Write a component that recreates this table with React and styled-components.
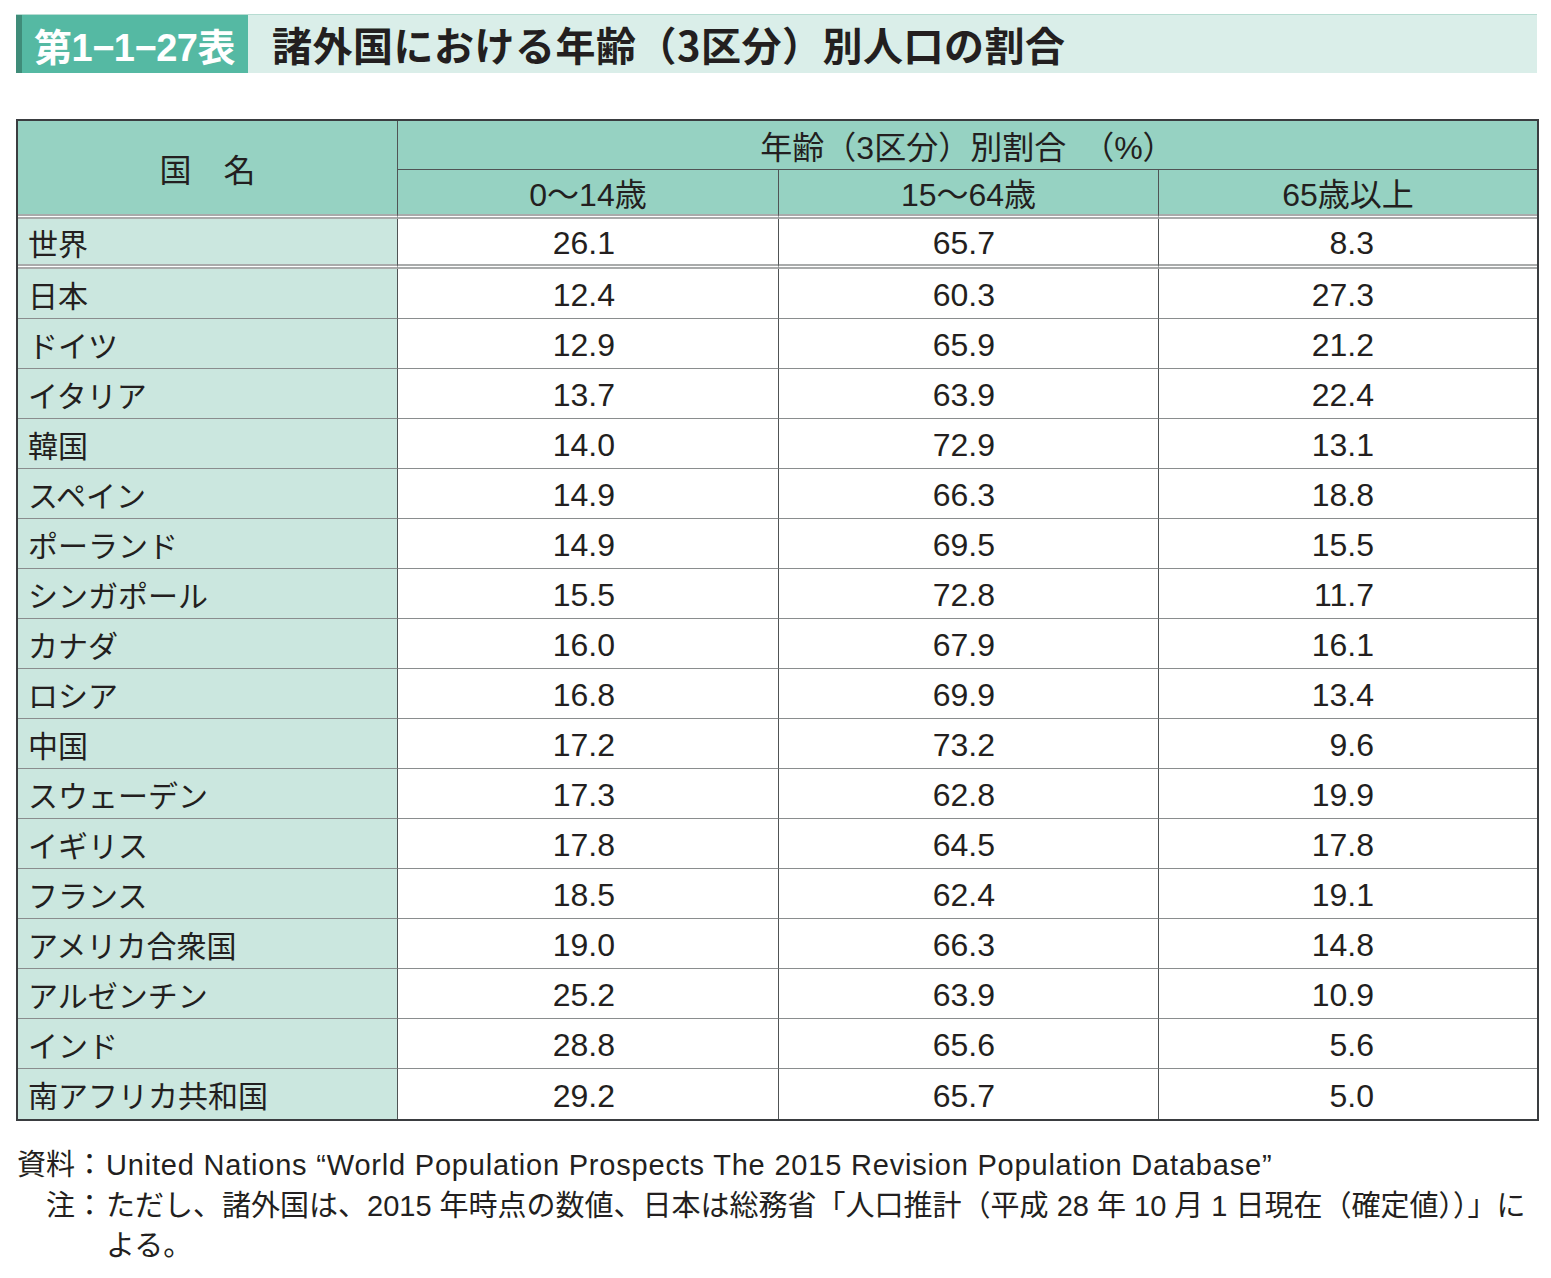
import React from "react";
import styled, { createGlobalStyle } from "styled-components";

const colors = {
  ink: "#231f20",
  label: "#55b9a3",
  stripe: "#3f8c79",
  titleBg: "#daeee9",
  head: "#96d2c2",
  name: "#cbe7df",
  frame: "#3a3d40",
  rule: "#8a8d8e",
  double: "#a9abab",
  vline: "#505455"
};

const jp = `"Noto Sans CJK JP", "Noto Sans", sans-serif`;
const latin = `"Liberation Sans", "Noto Sans CJK JP", sans-serif`;

const GlobalStyle = createGlobalStyle`
  body {
    margin: 0;
    background: #fff;
    color: ${colors.ink};
    font-family: ${jp};
  }
  * { box-sizing: border-box; }
`;

const Page = styled.div`
  width: 1551px;
  padding: 14px 12px 0 16px;
`;

const TitleBar = styled.div`
  display: flex;
  align-items: center;
  height: 59px;
  width: 1521px;
  background: ${colors.titleBg};
  border-top: 1px solid #b7dcd2;
`;

const TitleLabel = styled.div`
  display: flex;
  align-items: center;
  width: 232px;
  height: 100%;
  padding-left: 12px;
  background: ${colors.label};
  border-left: 6px solid ${colors.stripe};
  color: #fff;
  font-family: ${latin};
  font-weight: 700;
  font-size: 38px;
  letter-spacing: -0.5px;
`;

const TitleText = styled.h1`
  margin: 0 0 0 24px;
  font-family: ${jp};
  font-weight: 700;
  font-size: 40px;
  letter-spacing: 0.5px;
`;

const Table = styled.div`
  margin-top: 46px;
  width: 1523px;
  display: grid;
  grid-template-columns: 380px 381px 380px 1fr;
  border: 2px solid ${colors.frame};
  background: #fff;
`;

const Cell = styled.div`
  display: flex;
  align-items: center;
  height: ${({ $h }) => $h || 50}px;
  background: ${({ $kind }) =>
    $kind === "head" ? colors.head : $kind === "name" ? colors.name : "#fff"};
  background-clip: padding-box;
  border-right: ${({ $last }) => ($last ? "none" : `1px solid ${colors.vline}`)};
  border-bottom: ${({ $line }) =>
    $line === "double"
      ? `5px double ${colors.double}`
      : $line === "single"
      ? `1px solid ${colors.rule}`
      : $line === "dark"
      ? `1px solid ${colors.vline}`
      : "none"};
  grid-column: ${({ $span }) => ($span ? `span ${$span}` : "auto")};
  grid-row: ${({ $rows }) => ($rows ? `span ${$rows}` : "auto")};
  justify-content: ${({ $kind }) =>
    $kind === "name" ? "flex-start" : $kind === "num" ? "flex-end" : "center"};
  padding: ${({ $kind }) =>
    $kind === "name" ? "0 0 0 10px" : $kind === "num" ? "4px 163px 0 0" : "0"};
  font-family: ${({ $kind }) => ($kind === "name" ? jp : latin)};
  font-size: ${({ $kind }) => ($kind === "name" ? 30 : 32)}px;
  white-space: nowrap;
`;

const Notes = styled.div`
  margin-top: 24px;
  display: grid;
  grid-template-columns: 90px 1fr;
  row-gap: 1px;
  font-family: ${latin};
  font-size: 29px;
  line-height: 40px;
`;

const NoteLabel = styled.div`
  text-align: right;
  padding-right: 2px;
  white-space: nowrap;
`;

const NoteText = styled.div`
  white-space: nowrap;
  letter-spacing: ${({ $track }) => $track || 0}px;
`;

const rows = [
  ["世界", "26.1", "65.7", "8.3"],
  ["日本", "12.4", "60.3", "27.3"],
  ["ドイツ", "12.9", "65.9", "21.2"],
  ["イタリア", "13.7", "63.9", "22.4"],
  ["韓国", "14.0", "72.9", "13.1"],
  ["スペイン", "14.9", "66.3", "18.8"],
  ["ポーランド", "14.9", "69.5", "15.5"],
  ["シンガポール", "15.5", "72.8", "11.7"],
  ["カナダ", "16.0", "67.9", "16.1"],
  ["ロシア", "16.8", "69.9", "13.4"],
  ["中国", "17.2", "73.2", "9.6"],
  ["スウェーデン", "17.3", "62.8", "19.9"],
  ["イギリス", "17.8", "64.5", "17.8"],
  ["フランス", "18.5", "62.4", "19.1"],
  ["アメリカ合衆国", "19.0", "66.3", "14.8"],
  ["アルゼンチン", "25.2", "63.9", "10.9"],
  ["インド", "28.8", "65.6", "5.6"],
  ["南アフリカ共和国", "29.2", "65.7", "5.0"]
];

export default function App() {
  return (
    <>
      <GlobalStyle />
      <Page>
        <TitleBar>
          <TitleLabel>第1−1−27表</TitleLabel>
          <TitleText>諸外国における年齢（3区分）別人口の割合</TitleText>
        </TitleBar>

        <Table>
          <Cell $kind="head" $rows={2} $h={98} $line="double">
            国　名
          </Cell>
          <Cell $kind="head" $span={3} $h={49} $line="dark" $last>
            年齢（3区分）別割合　（%）
          </Cell>
          <Cell $kind="head" $h={49} $line="double">0〜14歳</Cell>
          <Cell $kind="head" $h={49} $line="double">15〜64歳</Cell>
          <Cell $kind="head" $h={49} $line="double" $last>65歳以上</Cell>

          {rows.map((r, i) => {
            const line =
              i === 0 ? "double" : i === rows.length - 1 ? "none" : "single";
            return (
              <React.Fragment key={r[0]}>
                <Cell $kind="name" $line={line}>{r[0]}</Cell>
                <Cell $kind="num" $line={line}>{r[1]}</Cell>
                <Cell $kind="num" $line={line}>{r[2]}</Cell>
                <Cell $kind="num" $line={line} $last>{r[3]}</Cell>
              </React.Fragment>
            );
          })}
        </Table>

        <Notes>
          <NoteLabel>資料：</NoteLabel>
          <NoteText $track={0.8}>
            United Nations “World Population Prospects The 2015 Revision Population Database”
          </NoteText>
          <NoteLabel>注：</NoteLabel>
          <NoteText>
            ただし、諸外国は、2015 年時点の数値、日本は総務省「人口推計（平成 28 年 10 月 1 日現在（確定値））」に
            <br />
            よる。
          </NoteText>
        </Notes>
      </Page>
    </>
  );
}
